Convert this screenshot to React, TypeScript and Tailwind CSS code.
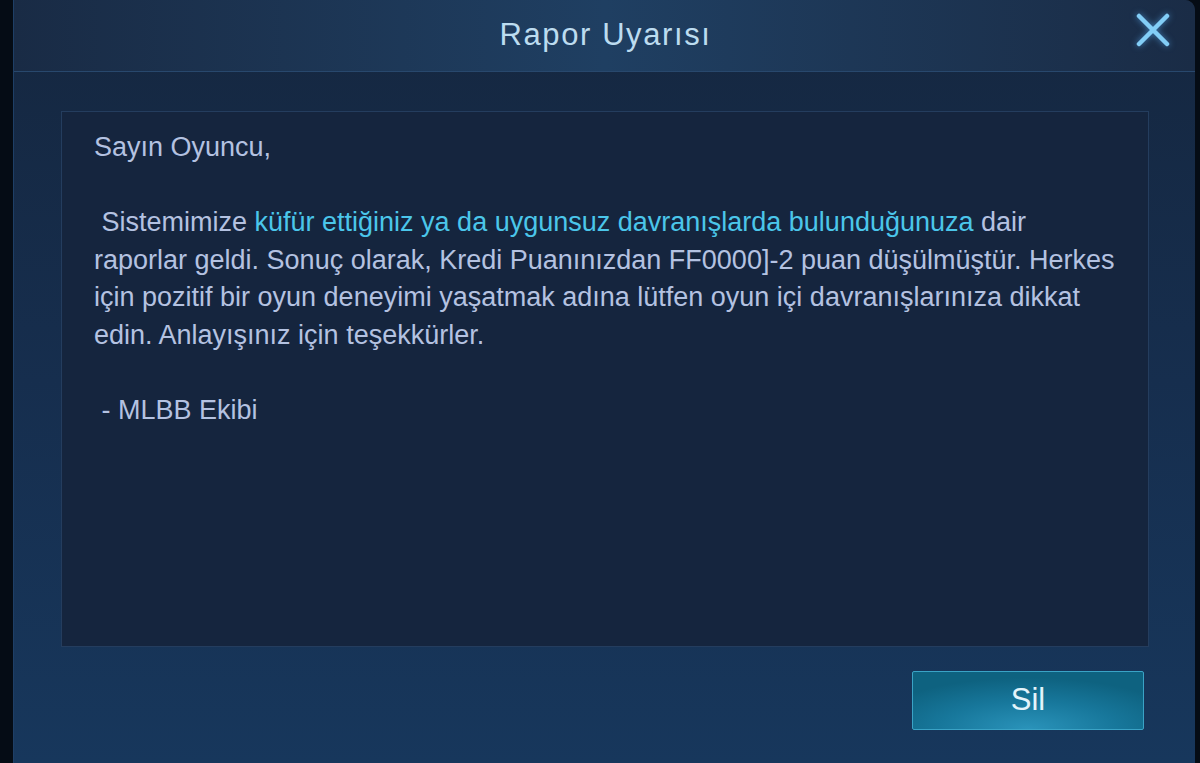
import React from "react";

export default function App() {
  const font = { fontFamily: '"Liberation Sans", Arial, sans-serif' };
  return (
    <div
      className="w-[1200px] h-[763px] overflow-hidden bg-[#050c15] flex pl-[13px] pr-[5px]"
      style={font}
    >
      <div className="flex-1 flex flex-col rounded-tr-[10px] overflow-hidden border-l border-[#1e3f66] bg-gradient-to-b from-[#152740] via-[#162e4e] to-[#17375c]">
        {/* Header */}
        <div className="relative h-[72px] shrink-0 flex items-center justify-center border-b border-[#28486d] bg-gradient-to-r from-[#192b45] via-[#1f3f62] to-[#1a2c46]">
          <span className="text-[31px] tracking-[1.6px] text-[#bcdcf0] mt-[-1px] ml-[2px]">Rapor Uyarısı</span>
          <button className="absolute right-[25px] top-[13px] w-[34px] h-[34px] flex items-center justify-center">
            <svg width="34" height="34" viewBox="0 0 34 34" style={{ filter: "drop-shadow(0 0 3px rgba(90,180,255,0.6))" }}>
              <path d="M3 3 L31 31 M31 3 L3 31" stroke="#82cdf6" strokeWidth="4.5" strokeLinecap="round" />
            </svg>
          </button>
        </div>
        {/* Body */}
        <div className="flex-1 flex flex-col pt-[39px] pl-[47px] pr-[46px]">
          <div className="h-[536px] border border-[#243d5e] bg-[#15253e] pt-[17px] pl-[32px] pr-[20px]">
            <div className="text-[27px] leading-[37.6px] text-[#b4c2e1] whitespace-pre">
              <div>Sayın Oyuncu,</div>
              <div>&nbsp;</div>
              <div>
                {" Sistemimize "}
                <span className="text-[#4bc6ea]">küfür ettiğiniz ya da uygunsuz davranışlarda bulunduğunuza</span>
                {" dair"}
              </div>
              <div>raporlar geldi. Sonuç olarak, Kredi Puanınızdan FF0000]-2 puan düşülmüştür. Herkes</div>
              <div>için pozitif bir oyun deneyimi yaşatmak adına lütfen oyun içi davranışlarınıza dikkat</div>
              <div>edin. Anlayışınız için teşekkürler.</div>
              <div>&nbsp;</div>
              <div>{" - MLBB Ekibi"}</div>
            </div>
          </div>
          <div className="flex justify-end pt-[24px] pr-[5px]">
            <button
              className="w-[232px] h-[59px] rounded-[2px] border border-[#3aa3c6] flex items-center justify-center text-[31px] text-[#e3f4fb]"
              style={{
                background:
                  "radial-gradient(ellipse 70% 90% at 50% 100%, #2a93ba 0%, #17779b 55%, #0e6280 100%)",
              }}
            >
              Sil
            </button>
          </div>
        </div>
      </div>
    </div>
  );
}
